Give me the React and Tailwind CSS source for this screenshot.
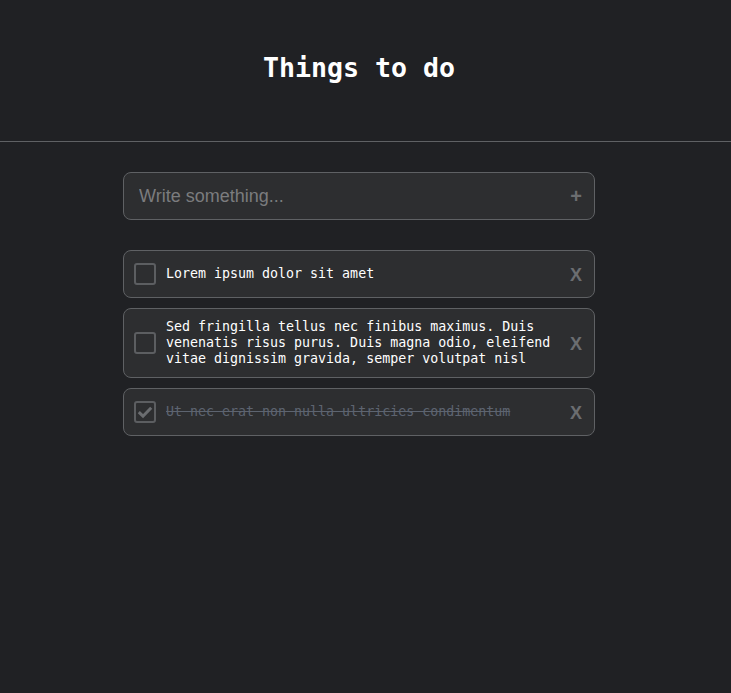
import { useState } from 'react';

const INITIAL = [
  { id: 1, text: 'Lorem ipsum dolor sit amet', done: false },
  { id: 2, text: 'Sed fringilla tellus nec finibus maximus. Duis venenatis risus purus. Duis magna odio, eleifend vitae dignissim gravida, semper volutpat nisl', done: false },
  { id: 3, text: 'Ut nec erat non nulla ultricies condimentum', done: true },
];

const mono = "font-['DejaVu_Sans_Mono',monospace]";

const App = () => {
  const [todos, setTodos] = useState(INITIAL);
  const [draft, setDraft] = useState('');

  const toggle = (id) => setTodos(prev => prev.map(t => t.id === id ? { ...t, done: !t.done } : t));
  const remove = (id) => setTodos(prev => prev.filter(t => t.id !== id));
  const add = () => {
    if (!draft.trim()) return;
    setTodos(prev => [...prev, { id: Date.now(), text: draft.trim(), done: false }]);
    setDraft('');
  };

  return (
    <div className="min-h-screen bg-[#202124] text-white">
      {/* Header */}
      <div className="h-[142px] flex items-center justify-center pr-[13px] border-b border-[#5f6164]">
        <h1 className={`${mono} text-[26.6px] font-bold tracking-normal pb-[6px]`}>Things to do</h1>
      </div>

      <div className="pr-[13px]">
        <div className="w-[472px] mx-auto pt-[30px]">
          {/* Input */}
          <div className="h-[48px] flex items-center bg-[#2d2e30] border border-[#5f6164] rounded-[8px] pl-[15px] pr-[12px]">
            <input
              value={draft}
              onChange={e => setDraft(e.target.value)}
              onKeyDown={e => e.key === 'Enter' && add()}
              placeholder="Write something..."
              className="flex-1 bg-transparent outline-none text-[18px] font-['Liberation_Sans',Arial,sans-serif] text-white placeholder:text-[#7b7c7e]"
            />
            <button onClick={add} className="text-[#6b6d70] text-[20px] font-bold font-['Liberation_Sans',Arial,sans-serif] leading-none">+</button>
          </div>

          {/* List */}
          <div className="mt-[30px] space-y-[10px]">
            {todos.map(t => (
              <div key={t.id} className="min-h-[48px] flex items-center bg-[#2d2e30] border border-[#5f6164] rounded-[8px] pl-[10px] pr-[12px] pt-[9px] pb-[10px]">
                <button
                  onClick={() => toggle(t.id)}
                  className="w-[22px] h-[22px] shrink-0 border-2 border-[#5c5e61] rounded-[3px] flex items-center justify-center"
                >
                  {t.done && (
                    <svg viewBox="0 0 16 16" className="w-[16px] h-[16px]">
                      <path d="M1.8 8.2 L6 12.2 L14.2 3.8" fill="none" stroke="#6b6d70" strokeWidth="3" />
                    </svg>
                  )}
                </button>
                <p className={`${mono} flex-1 ml-[10px] mr-[14px] pt-[1px] text-[13.3px] leading-[16px] ${t.done ? 'text-[#5d6470] line-through' : 'text-white'}`}>
                  {t.text}
                </p>
                <button onClick={() => remove(t.id)} className="text-[#6b6d70] text-[18px] font-bold font-['Liberation_Sans',Arial,sans-serif] leading-none shrink-0 pt-[3px]">
                  X
                </button>
              </div>
            ))}
          </div>
        </div>
      </div>
    </div>
  );
};

export default App;
